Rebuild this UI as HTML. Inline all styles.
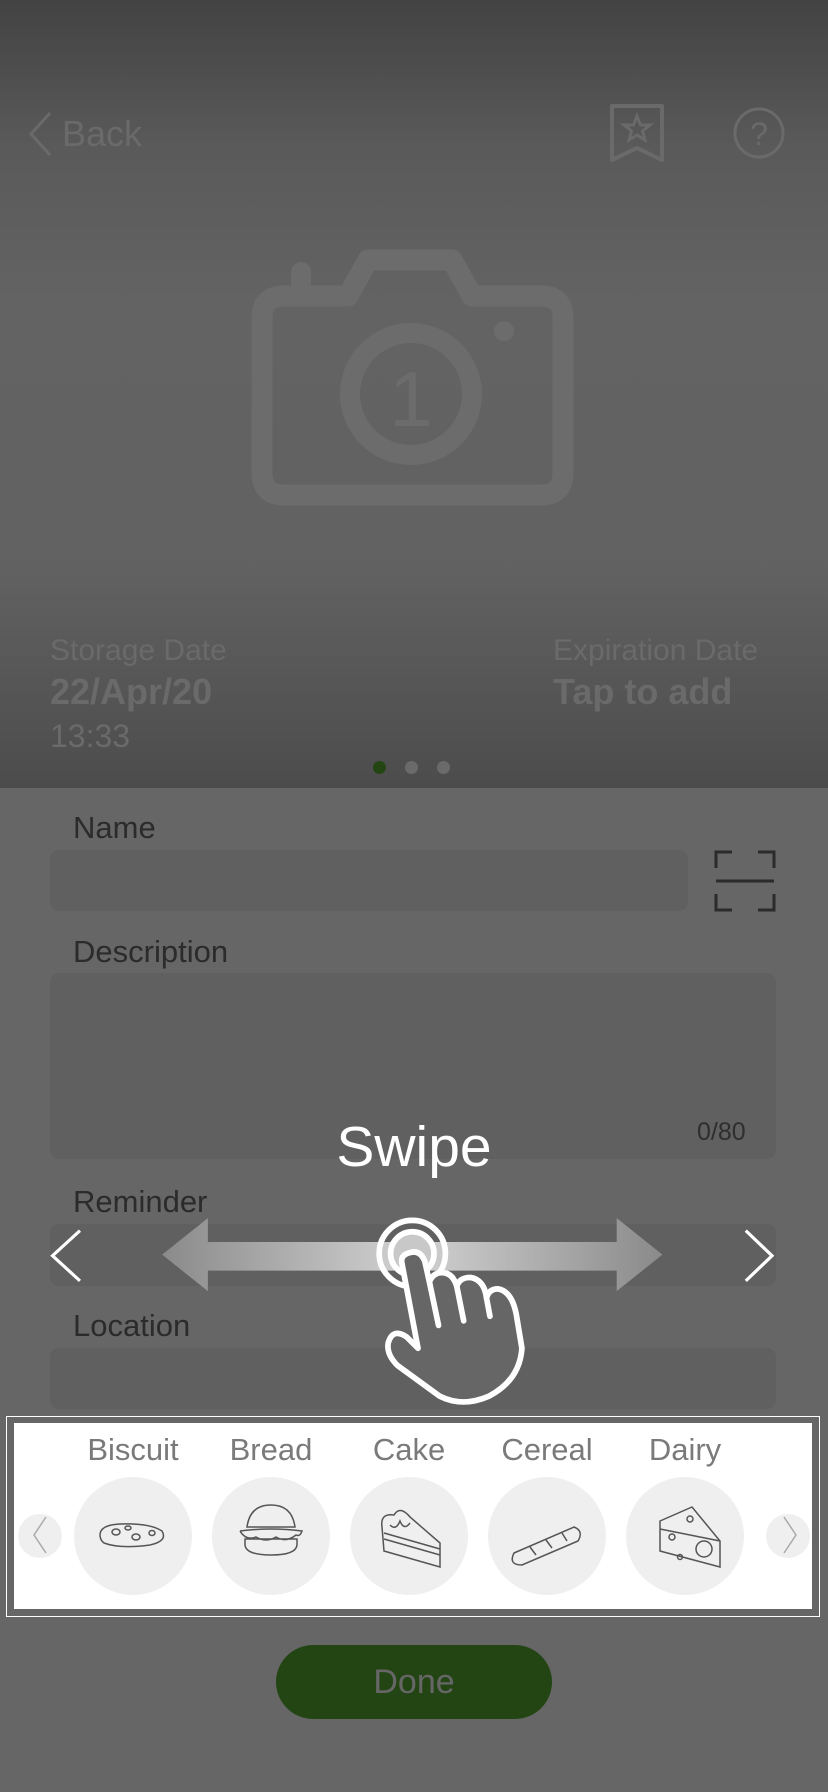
<!DOCTYPE html>
<html><head><meta charset="utf-8"><style>
*{margin:0;padding:0;box-sizing:border-box}
body{width:828px;height:1792px;position:relative;overflow:hidden;background:#666;font-family:"Liberation Sans",sans-serif}
.top{position:absolute;left:0;top:0;width:828px;height:788px;background:linear-gradient(#434343 0,#5a5a5a 150px,#636363 300px,#626262 560px,#4c4c4c 788px)}
.a{position:absolute;white-space:nowrap}
.lbl{color:#2b2b2b;font-size:31px}
.inp{position:absolute;background:#606060;border-radius:9px}
.cat{position:absolute;width:118px;height:118px;border-radius:50%;background:#efefef}
.cl{position:absolute;color:#7a7a7a;font-size:31px;width:140px;text-align:center}
</style></head><body>
<div class="top"></div>
<svg class="a" style="left:26px;top:110px" width="28" height="48"><path d="M24 3 L5 24 L24 45" stroke="#6a6a6a" stroke-width="3" fill="none"/></svg>
<div class="a" style="left:62px;top:113px;font-size:36px;color:#6a6a6a">Back</div>
<svg class="a" style="left:608px;top:102px" width="58" height="62"><path d="M4 4 H54 V58 L29 46 L4 58 Z" stroke="#6a6a6a" stroke-width="4" fill="none" stroke-linejoin="round"/><path d="M29 14 L32.5 23 L42 23 L34.5 29 L37 38 L29 33 L21 38 L23.5 29 L16 23 L25.5 23 Z" stroke="#6a6a6a" stroke-width="3" fill="none"/></svg>
<svg class="a" style="left:732px;top:106px" width="54" height="54"><circle cx="27" cy="27" r="24" stroke="#6a6a6a" stroke-width="3" fill="none"/><text x="27" y="39" text-anchor="middle" font-size="32" fill="#6a6a6a" font-family="Liberation Sans">?</text></svg>
<svg class="a" style="left:0;top:0" width="828" height="600">
<path d="M262 318 Q262 296 284 296 H348 L368 260 H452 L472 296 H541 Q563 296 563 318 V473 Q563 495 541 495 H284 Q262 495 262 473 Z" stroke="#6c6c6c" stroke-width="21" fill="none" stroke-linejoin="round"/>
<circle cx="411" cy="394" r="61" stroke="#6c6c6c" stroke-width="20" fill="none"/>
<circle cx="504" cy="331" r="10" fill="#6c6c6c"/>
<rect x="291" y="262" width="20" height="30" rx="10" fill="#6c6c6c"/>
<text x="411" y="426" text-anchor="middle" font-size="78" fill="#6c6c6c" font-family="Liberation Sans">1</text></svg>
<div class="a" style="left:50px;top:634px;font-size:30px;color:#6a6a6a">Storage Date</div>
<div class="a" style="left:50px;top:671px;font-size:36px;font-weight:bold;color:#6a6a6a">22/Apr/20</div>
<div class="a" style="left:50px;top:718px;font-size:32px;color:#6a6a6a">13:33</div>
<div class="a" style="left:553px;top:634px;font-size:30px;color:#6a6a6a">Expiration Date</div>
<div class="a" style="left:553px;top:671px;font-size:36px;font-weight:bold;color:#6a6a6a">Tap to add</div>
<div class="a" style="left:373px;top:761px;width:13px;height:13px;border-radius:50%;background:#234514"></div>
<div class="a" style="left:405px;top:761px;width:13px;height:13px;border-radius:50%;background:#6a6a6a"></div>
<div class="a" style="left:437px;top:761px;width:13px;height:13px;border-radius:50%;background:#6a6a6a"></div>

<div class="a lbl" style="left:73px;top:810px">Name</div>
<div class="inp" style="left:50px;top:850px;width:638px;height:61px"></div>
<svg class="a" style="left:714px;top:850px" width="62" height="62"><path d="M2 18 V2 H18 M44 2 H60 V18 M2 44 V60 H18 M44 60 H60 V44 M2 31 H60" stroke="#2b2b2b" stroke-width="3" fill="none"/></svg>
<div class="a lbl" style="left:73px;top:934px">Description</div>
<div class="inp" style="left:50px;top:973px;width:726px;height:186px"></div>
<div class="a" style="left:697px;top:1118px;font-size:25px;color:#2e2e2e">0/80</div>
<div class="a lbl" style="left:73px;top:1184px">Reminder</div>
<div class="inp" style="left:50px;top:1224px;width:726px;height:62px"></div>
<div class="a lbl" style="left:73px;top:1308px">Location</div>
<div class="inp" style="left:50px;top:1348px;width:726px;height:61px"></div>

<div class="a" style="left:0;top:1114px;width:828px;text-align:center;font-size:57px;color:#fff">Swipe</div>
<svg class="a" style="left:0;top:0" width="828" height="1792" viewBox="0 0 725 1568">
<defs><linearGradient id="g" x1="0" x2="1"><stop offset="0" stop-color="#8a8a8a"/><stop offset="0.5" stop-color="#d2d2d2"/><stop offset="1" stop-color="#8a8a8a"/></linearGradient></defs>
<path d="M142 1098 L182 1066 V1087 H540 V1066 L580 1098 L540 1130 V1112 H182 V1130 Z" fill="url(#g)"/>
<path d="M70 1077 L46 1099 L70 1121" stroke="#fff" stroke-width="2.8" fill="none"/>
<path d="M653 1077 L676 1099 L653 1121" stroke="#fff" stroke-width="2.8" fill="none"/>
<circle cx="361" cy="1097" r="29" stroke="#fff" stroke-width="5" fill="none"/>
<circle cx="361" cy="1097" r="19" fill="#c8c8c8" stroke="#fff" stroke-width="5"/>
<path d="M352 1106 L366 1180 L356 1170 Q344 1162 340 1175 Q338 1185 348 1195 L385 1222 Q405 1232 428 1222 Q455 1208 457 1180 L452 1150 Q448 1130 436 1128 Q428 1128 426 1136 Q424 1120 412 1118 Q402 1118 400 1126 Q396 1112 384 1114 Q378 1116 376 1122 L372 1104 Q368 1094 360 1096 Q350 1098 352 1106 Z" fill="#666" stroke="#fff" stroke-width="5" stroke-linejoin="round"/>
<path d="M376 1122 L384 1160 M400 1126 L406 1156 M426 1136 L429 1152" stroke="#fff" stroke-width="5" stroke-linecap="round"/>
</svg>

<div class="a" style="left:6px;top:1416px;width:814px;height:201px;border:1.5px solid #fff"></div>
<div class="a" style="left:14px;top:1423px;width:798px;height:186px;background:#fff"></div>
<div class="cl" style="left:63px;top:1432px">Biscuit</div>
<div class="cl" style="left:201px;top:1432px">Bread</div>
<div class="cl" style="left:339px;top:1432px">Cake</div>
<div class="cl" style="left:477px;top:1432px">Cereal</div>
<div class="cl" style="left:615px;top:1432px">Dairy</div>
<div class="cat" style="left:74px;top:1477px"></div>
<div class="cat" style="left:212px;top:1477px"></div>
<div class="cat" style="left:350px;top:1477px"></div>
<div class="cat" style="left:488px;top:1477px"></div>
<div class="cat" style="left:626px;top:1477px"></div>
<div class="a" style="left:18px;top:1514px;width:44px;height:44px;border-radius:50%;background:#efefef"></div>
<div class="a" style="left:766px;top:1514px;width:44px;height:44px;border-radius:50%;background:#efefef"></div>
<svg class="a" style="left:0;top:1477px" width="828" height="120" fill="none" stroke="#555" stroke-width="1.5">
<path d="M46 40 L34 58 L46 76 M784 40 L796 58 L784 76" stroke="#aaa"/>
<path d="M100 58 Q100 48 120 47 Q150 46 162 54 Q168 64 150 68 Q120 72 104 66 Q100 63 100 58 Z"/><ellipse cx="116" cy="55" rx="4" ry="3"/><ellipse cx="136" cy="60" rx="4" ry="3"/><ellipse cx="152" cy="56" rx="3" ry="2.5"/><ellipse cx="128" cy="51" rx="3" ry="2"/>
<path d="M247 50 Q250 28 271 28 Q292 28 295 50 Z M240 54 Q271 50 302 54 Q300 60 296 58 Q286 66 276 60 Q266 66 256 60 Q246 64 240 54 M245 62 H297 V68 Q296 78 271 78 Q246 78 245 68 Z"/>
<path d="M382 50 Q380 36 394 38 Q400 28 410 40 L440 66 V90 L384 74 Z M384 56 L440 72 M384 62 L440 78 M390 48 Q396 54 400 44 Q404 54 410 46"/>
<path d="M514 76 L574 50 Q584 54 578 64 L522 88 Q508 88 514 76 Z M530 70 L536 78 M546 63 L552 71 M562 56 L567 64"/>
<path d="M660 44 L692 30 L720 64 V90 L660 74 Z M660 52 L720 64"/><circle cx="704" cy="72" r="8"/><circle cx="672" cy="60" r="3"/><circle cx="690" cy="42" r="3"/><circle cx="680" cy="80" r="2.5"/>
</svg>

<div class="a" style="left:276px;top:1645px;width:276px;height:74px;border-radius:37px;background:#234514;color:#666;font-size:34px;text-align:center;line-height:74px">Done</div>
</body></html>
